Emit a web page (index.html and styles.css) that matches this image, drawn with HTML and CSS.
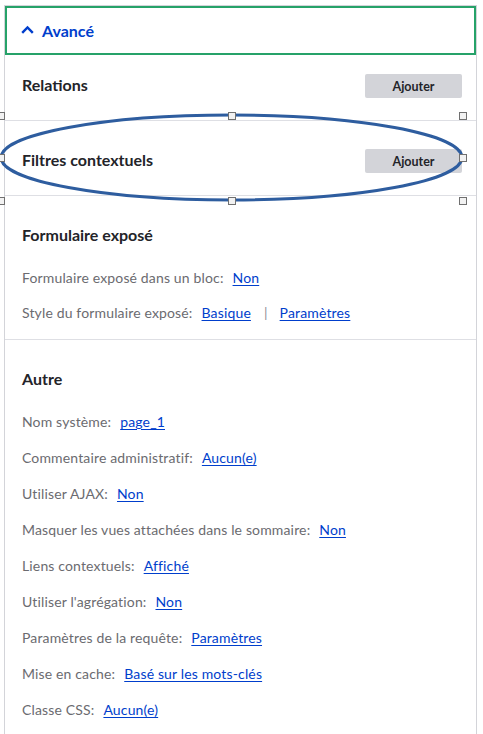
FILE: index.html
```html
<!DOCTYPE html>
<html lang="fr">
<head>
<meta charset="utf-8">
<link rel="stylesheet" href="styles.css">
</head>
<body>
<div class="panel">
  <div class="summary">
    <svg class="chev" width="13" height="9" viewBox="0 0 13 9"><path d="M1.2 7.8 L6.5 2.4 L11.8 7.8" fill="none" stroke="#003ecc" stroke-width="2.4"/></svg>
    <span>Avancé</span>
  </div>
  <div class="row row-first">
    <h3 class="title">Relations</h3>
    <button class="btn">Ajouter</button>
  </div>
  <div class="row row-second">
    <h3 class="title">Filtres contextuels</h3>
    <button class="btn">Ajouter</button>
  </div>
  <div class="section">
    <h3 class="title">Formulaire exposé</h3>
    <ul class="items items-tight">
      <li>Formulaire exposé dans un bloc:<a href="#">Non</a></li>
      <li>Style du formulaire exposé:<a href="#">Basique</a><span class="sep">|</span><a class="nomargin" href="#">Paramètres</a></li>
    </ul>
  </div>
  <div class="section last">
    <h3 class="title">Autre</h3>
    <ul class="items">
      <li>Nom système:<a href="#">page_1</a></li>
      <li>Commentaire administratif:<a href="#">Aucun(e)</a></li>
      <li>Utiliser AJAX:<a href="#">Non</a></li>
      <li>Masquer les vues attachées dans le sommaire:<a href="#">Non</a></li>
      <li>Liens contextuels:<a href="#">Affiché</a></li>
      <li>Utiliser l'agrégation:<a href="#">Non</a></li>
      <li>Paramètres de la requête:<a href="#">Paramètres</a></li>
      <li>Mise en cache:<a href="#">Basé sur les mots-clés</a></li>
      <li>Classe CSS:<a href="#">Aucun(e)</a></li>
    </ul>
  </div>
</div>
<svg class="ellipse" width="483" height="210" viewBox="0 0 483 210">
  <ellipse cx="231.5" cy="157.5" rx="230.5" ry="42.5" fill="none" stroke="#2e5d9f" stroke-width="3"/>
</svg>
<span class="handle" style="left:-3px;top:112px"></span>
<span class="handle" style="left:228px;top:112px"></span>
<span class="handle" style="left:459px;top:112px"></span>
<span class="handle" style="left:-3px;top:154px"></span>
<span class="handle" style="left:459px;top:154px"></span>
<span class="handle" style="left:-3px;top:197px"></span>
<span class="handle" style="left:228px;top:197px"></span>
<span class="handle" style="left:459px;top:197px"></span>
</body>
</html>
```
FILE: styles.css
```css
html, body {
  margin: 0;
  padding: 0;
  background: #fff;
}
body {
  font-family: Lato, "Noto Sans", sans-serif;
  color: #232429;
  position: relative;
  height: 734px;
  overflow: hidden;
}
.panel {
  margin: 5px 0 0 4px;
  width: 471px;
  border: 1px solid #d3d4d9;
  border-bottom: none;
  min-height: 740px;
}
.summary {
  height: 45px;
  border: 2px solid #26a269;
  display: flex;
  align-items: center;
  padding-left: 14px;
  gap: 8px;
  color: #003ecc;
  font-weight: 700;
  font-size: 16px;
}
.chev {
  margin-top: -2px;
}
.row {
  display: flex;
  justify-content: space-between;
  align-items: center;
  padding: 0 14px 0 17px;
  border-bottom: 1px solid #dedfe4;
}
.row .title {
  margin-top: -4px;
}
.row-first {
  padding-top: 19px;
  padding-bottom: 22px;
}
.row-second {
  padding-top: 28px;
  padding-bottom: 22px;
}
.title {
  margin: 0;
  font-size: 16px;
  font-weight: 700;
  color: #232429;
}
.btn {
  width: 97px;
  height: 24px;
  border: none;
  border-radius: 2px;
  background: #d3d4d9;
  color: #232429;
  font-family: inherit;
  font-weight: 700;
  font-size: 12.5px;
  padding: 0;
}
.section {
  padding: 29px 17px 9px;
  border-bottom: 1px solid #dedfe4;
}
.section.last {
  border-bottom: none;
}
.items {
  list-style: none;
  margin: 16px 0 0;
  padding: 0;
  font-size: 14px;
  letter-spacing: 0.15px;
  color: #6b6b70;
}
.items li {
  height: 36px;
  line-height: 36px;
}
.items-tight li {
  height: 35px;
  line-height: 35px;
}
.items a {
  color: #003ecc;
  text-decoration: underline;
  text-underline-offset: 2px;
  margin-left: 9px;
}
.sep {
  color: #909096;
  margin: 0 12px 0 13px;
}
.items a.nomargin {
  margin-left: 0;
}
.ellipse {
  position: absolute;
  left: 0;
  top: 0;
}
.handle {
  position: absolute;
  width: 6px;
  height: 6px;
  background: #f2f2f2;
  border: 1px solid #707070;
}
```
